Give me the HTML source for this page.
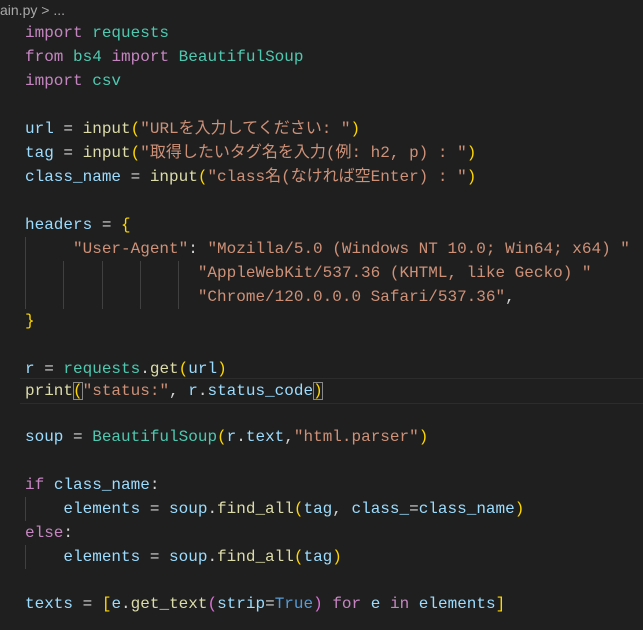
<!DOCTYPE html>
<html><head><meta charset="utf-8"><style>
body{margin:0;width:643px;height:630px;background:#1f1f1f;overflow:hidden;position:relative}
.bc{position:absolute;left:0;top:2px;height:22px;line-height:20px;font:14px "Liberation Sans","Noto Sans CJK JP",sans-serif;color:#a9a9a9}
.l{position:absolute;left:25px;height:24px;line-height:24px;font-family:"Liberation Mono","Noto Sans CJK JP",monospace;font-size:16px;color:#d4d4d4;white-space:pre}
.k{color:#c586c0}.m{color:#4ec9b0}.v{color:#9cdcfe}.f{color:#dcdcaa}.s{color:#ce9178}.b{color:#ffd700}.p{color:#da70d6}.c{color:#569cd6}
.g{position:absolute;width:1px;background:#404040}
.hl{position:absolute;left:20px;right:0;top:378px;height:24px;border-top:1px solid #2c2c2c;border-bottom:1px solid #2c2c2c}
.bx{outline:1px solid #888;outline-offset:-1px}
</style></head><body>
<div class="bc">ain.py &gt; ...</div>
<div class="hl"></div>
<div class="g" style="left:25px;top:237px;height:72px"></div>
<div class="g" style="left:63px;top:261px;height:48px"></div>
<div class="g" style="left:102px;top:261px;height:48px"></div>
<div class="g" style="left:140px;top:261px;height:48px"></div>
<div class="g" style="left:178px;top:261px;height:48px"></div>
<div class="g" style="left:25px;top:497px;height:24px"></div>
<div class="g" style="left:25px;top:545px;height:24px"></div>
<div class="l" style="top:21px"><span class="k">import</span> <span class="m">requests</span></div>
<div class="l" style="top:45px"><span class="k">from</span> <span class="m">bs4</span> <span class="k">import</span> <span class="m">BeautifulSoup</span></div>
<div class="l" style="top:69px"><span class="k">import</span> <span class="m">csv</span></div>
<div class="l" style="top:117px"><span class="v">url</span> = <span class="f">input</span><span class="b">(</span><span class="s">"URLを入力してください: "</span><span class="b">)</span></div>
<div class="l" style="top:141px"><span class="v">tag</span> = <span class="f">input</span><span class="b">(</span><span class="s">"取得したいタグ名を入力(例: h2, p) : "</span><span class="b">)</span></div>
<div class="l" style="top:165px"><span class="v">class_name</span> = <span class="f">input</span><span class="b">(</span><span class="s">"class名(なければ空Enter) : "</span><span class="b">)</span></div>
<div class="l" style="top:213px"><span class="v">headers</span> = <span class="b">{</span></div>
<div class="l" style="top:237px">     <span class="s">"User-Agent"</span>: <span class="s">"Mozilla/5.0 (Windows NT 10.0; Win64; x64) "</span></div>
<div class="l" style="top:261px">                  <span class="s">"AppleWebKit/537.36 (KHTML, like Gecko) "</span></div>
<div class="l" style="top:285px">                  <span class="s">"Chrome/120.0.0.0 Safari/537.36"</span>,</div>
<div class="l" style="top:309px"><span class="b">}</span></div>
<div class="l" style="top:357px"><span class="v">r</span> = <span class="m">requests</span>.<span class="f">get</span><span class="b">(</span><span class="v">url</span><span class="b">)</span></div>
<div class="l" style="top:379px"><span class="f">print</span><span class="b bx">(</span><span class="s">"status:"</span>, <span class="v">r</span>.<span class="v">status_code</span><span class="b bx">)</span></div>
<div class="l" style="top:425px"><span class="v">soup</span> = <span class="m">BeautifulSoup</span><span class="b">(</span><span class="v">r</span>.<span class="v">text</span>,<span class="s">"html.parser"</span><span class="b">)</span></div>
<div class="l" style="top:473px"><span class="k">if</span> <span class="v">class_name</span>:</div>
<div class="l" style="top:497px">    <span class="v">elements</span> = <span class="v">soup</span>.<span class="f">find_all</span><span class="b">(</span><span class="v">tag</span>, <span class="v">class_</span>=<span class="v">class_name</span><span class="b">)</span></div>
<div class="l" style="top:521px"><span class="k">else</span>:</div>
<div class="l" style="top:545px">    <span class="v">elements</span> = <span class="v">soup</span>.<span class="f">find_all</span><span class="b">(</span><span class="v">tag</span><span class="b">)</span></div>
<div class="l" style="top:592px"><span class="v">texts</span> = <span class="b">[</span><span class="v">e</span>.<span class="f">get_text</span><span class="p">(</span><span class="v">strip</span>=<span class="c">True</span><span class="p">)</span> <span class="k">for</span> <span class="v">e</span> <span class="k">in</span> <span class="v">elements</span><span class="b">]</span></div>
</body></html>
